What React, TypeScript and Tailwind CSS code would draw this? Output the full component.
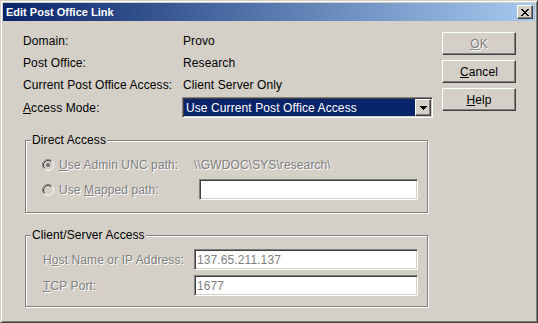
import React from 'react';

// classic Win2000 bevels
const sunken =
  'border border-t-[#808080] border-l-[#808080] border-b-white border-r-white shadow-[inset_1px_1px_0_#404040,inset_-1px_-1px_0_#d4d0c8]';
const raised =
  'border border-t-white border-l-white border-b-[#404040] border-r-[#404040] shadow-[inset_-1px_-1px_0_#808080]';
const etched = 'border border-[#808080] shadow-[1px_1px_0_#fff,inset_1px_1px_0_#fff]';
const dis = 'text-[#808080] [text-shadow:1px_1px_0_#fff]';

function Radio({ checked }: { checked?: boolean }) {
  return (
    <svg width="12" height="12" viewBox="0 0 12 12" className="shrink-0">
      <circle cx="6" cy="6" r="4.2" fill="#d4d0c8" />
      <path d="M2.11 9.89 A5.5 5.5 0 0 1 9.89 2.11" fill="none" stroke="#808080" />
      <path d="M9.89 2.11 A5.5 5.5 0 0 1 2.11 9.89" fill="none" stroke="#ffffff" />
      <path d="M2.82 9.18 A4.5 4.5 0 0 1 9.18 2.82" fill="none" stroke="#404040" />
      <path d="M9.18 2.82 A4.5 4.5 0 0 1 2.82 9.18" fill="none" stroke="#d4d0c8" />
      {checked && <circle cx="6" cy="6" r="2" fill="#6e6e6e" />}
    </svg>
  );
}

function CloseGlyph() {
  const rows = ['11000011', '01100110', '00111100', '00011000', '00111100', '01100110', '11000011'];
  return (
    <svg width="8" height="7" viewBox="0 0 8 7" shapeRendering="crispEdges">
      {rows.map((r, y) =>
        r.split('').map((c, x) => (c === '1' ? <rect key={`${x}-${y}`} x={x} y={y} width="1" height="1" fill="#000" /> : null))
      )}
    </svg>
  );
}

function Arrow() {
  return (
    <svg width="7" height="4" viewBox="0 0 7 4" shapeRendering="crispEdges">
      <rect x="0" y="0" width="7" height="1" fill="#000" />
      <rect x="1" y="1" width="5" height="1" fill="#000" />
      <rect x="2" y="2" width="3" height="1" fill="#000" />
      <rect x="3" y="3" width="1" height="1" fill="#000" />
    </svg>
  );
}

function Button({ children, disabled }: { children: React.ReactNode; disabled?: boolean }) {
  return (
    <div className={`w-[74px] h-[23px] bg-[#d4d0c8] flex items-center justify-center ${raised} ${disabled ? dis : ''}`}>
      {children}
    </div>
  );
}

function Group({ title, children, h }: { title: string; children: React.ReactNode; h: string }) {
  return (
    <div className={`relative ml-[2px] w-[403px] ${h} ${etched}`}>
      <span className="absolute -top-[8px] left-[5px] px-[1px] bg-[#d4d0c8] leading-[14px]">{title}</span>
      {children}
    </div>
  );
}

export default function App() {
  return (
    <div className="w-[538px] h-[323px] bg-[#d4d0c8] border border-t-[#d4d0c8] border-l-[#d4d0c8] border-b-[#404040] border-r-[#404040] shadow-[inset_1px_1px_0_#fff,inset_-1px_-1px_0_#808080] p-[2px] flex flex-col font-['Liberation_Sans',Arial,sans-serif] text-[12px] leading-[14px] tracking-[0.1px] text-black select-none">
      {/* title bar */}
      <div className="h-[18px] shrink-0 flex items-center pl-[3px] pr-[2px] bg-[linear-gradient(to_right,#0a246a,#a6caf0)]">
        <span className="text-white font-bold text-[11px] tracking-normal">Edit Post Office Link</span>
        <div className={`ml-auto w-[16px] h-[14px] bg-[#d4d0c8] flex items-center justify-center ${raised}`}>
          <CloseGlyph />
        </div>
      </div>

      <div className="flex pl-[20px] pt-[9px]">
        <div className="w-[410px] flex flex-col">
          <div className="h-[22px] flex items-center">
            <span className="w-[160px]">Domain:</span>
            <span>Provo</span>
          </div>
          <div className="h-[22px] flex items-center">
            <span className="w-[160px]">Post Office:</span>
            <span>Research</span>
          </div>
          <div className="h-[22px] flex items-center">
            <span className="w-[160px]">Current Post Office Access:</span>
            <span>Client Server Only</span>
          </div>
          <div className="h-[22px] flex items-start">
            <span className="w-[159px] mt-[5px]">
              <u>A</u>ccess Mode:
            </span>
            <div className={`mt-[1px] w-[251px] h-[21px] bg-white p-[1px] flex ${sunken}`}>
              <div className="flex-1 bg-[#0a246a] text-white flex items-center pl-[2px]">Use Current Post Office Access</div>
              <div className={`w-[16px] h-[17px] bg-[#d4d0c8] flex items-center justify-center ${raised}`}>
                <Arrow />
              </div>
            </div>
          </div>

          <div className="mt-[22px]">
            <Group title="Direct Access" h="h-[73px]">
              <div className="pt-[14px] pl-[16px] flex flex-col">
                <div className="h-[20px] flex items-center">
                  <Radio checked />
                  <span className={`ml-[5px] w-[135px] ${dis}`}>
                    <u>U</u>se Admin UNC path:
                  </span>
                  <span className={dis}>\\GWDOC\SYS\research\</span>
                </div>
                <div className="mt-[4px] h-[21px] flex items-center">
                  <Radio />
                  <span className={`ml-[5px] w-[140px] ${dis}`}>
                    Use <u>M</u>apped path:
                  </span>
                  <div className={`w-[219px] h-[21px] bg-white ${sunken}`} />
                </div>
              </div>
            </Group>
          </div>

          <div className="mt-[22px]">
            <Group title="Client/Server Access" h="h-[72px]">
              <div className="pt-[13px] pl-[17px] flex flex-col">
                <div className="h-[21px] flex items-center">
                  <span className={`w-[151px] ${dis}`}>
                    H<u>o</u>st Name or IP Address:
                  </span>
                  <div className={`w-[224px] h-[21px] bg-white pl-[2px] flex items-center text-[#808080] ${sunken}`}>137.65.211.137</div>
                </div>
                <div className="mt-[5px] h-[21px] flex items-center">
                  <span className={`w-[151px] ${dis}`}>
                    <u>T</u>CP Port:
                  </span>
                  <div className={`w-[224px] h-[21px] bg-white pl-[2px] flex items-center text-[#808080] ${sunken}`}>1677</div>
                </div>
              </div>
            </Group>
          </div>
        </div>

        <div className="ml-[9px] mt-[2px] flex flex-col gap-[5px]">
          <Button disabled>
            <span>
              <u>O</u>K
            </span>
          </Button>
          <Button>
            <span>
              <u>C</u>ancel
            </span>
          </Button>
          <Button>
            <span>
              <u>H</u>elp
            </span>
          </Button>
        </div>
      </div>
    </div>
  );
}
